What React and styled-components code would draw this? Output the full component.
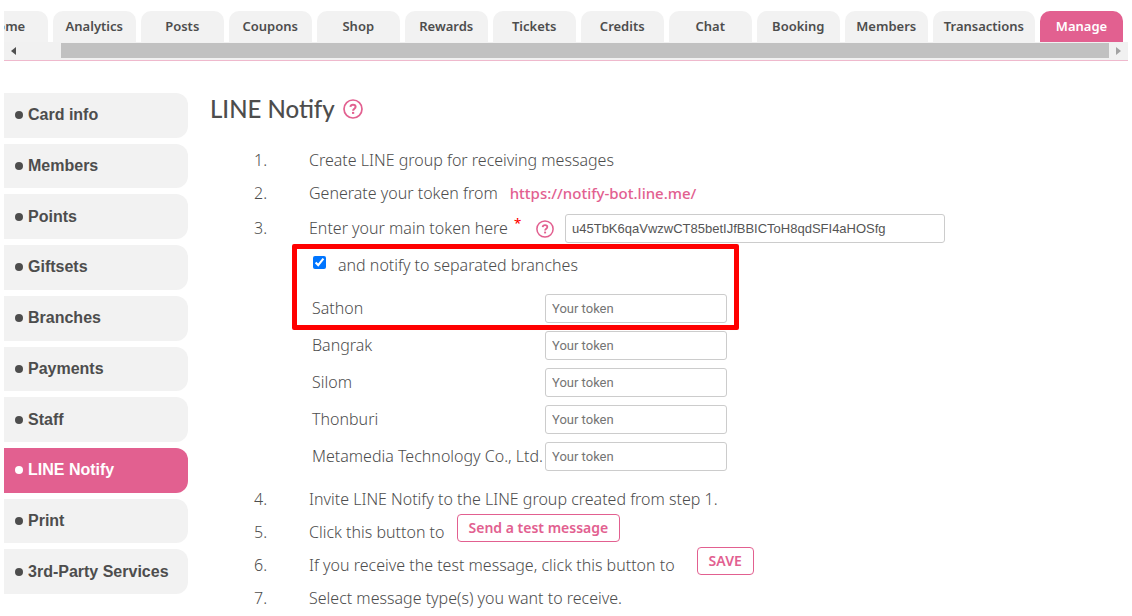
import React, { useState } from 'react';
import styled, { createGlobalStyle, ThemeProvider } from 'styled-components';

const theme = {
  pink: '#e26090',
  pinkLine: '#efb9cd',
  text: '#4d4d4d',
  panel: '#f2f2f2',
  border: '#cccccc',
  red: '#ff0000',
  font: '"Noto Sans", "Open Sans", sans-serif',
  heading: 'Lato, "Noto Sans", sans-serif',
  arial: '"Liberation Sans", Arial, sans-serif',
};

const GlobalStyle = createGlobalStyle`
  * {
    box-sizing: border-box;
  }

  body {
    margin: 0;
    background: #fff;
    color: ${theme.text};
    font-family: ${theme.font};
    font-size: 16px;
  }
`;

const Page = styled.div`
  padding: 11px 4px 0;
`;

const Header = styled.header`
  border-bottom: 1px solid ${({theme}) => theme.pinkLine};
`;

const Tabs = styled.nav`
  display: flex;
  justify-content: flex-end;
  gap: 5px;
  padding-right: 5px;
  overflow: hidden;
`;

const Tab = styled.a`
  flex: none;
  min-width: 83px;
  padding: 0 11px 1px;
  border-radius: 10px 10px 0 0;
  background: ${({theme, $active}) => $active ? theme.pink : theme.panel};
  color: ${({theme, $active}) => $active ? '#fff' : theme.text};
  font-size: 13px;
  font-weight: 600;
  line-height: 30px;
  text-align: center;
  text-decoration: none;
`;

const Scrollbar = styled.div`
  display: flex;
  height: 18px;
  padding: 1px 0 2px;
  background: #f1f1f1;
`;

const ScrollButton = styled.button`
  display: flex;
  width: 19px;
  align-items: center;
  justify-content: center;
  padding: 0;
  border: 0;
  background: transparent;
  color: ${({$dim}) => $dim ? '#a3a3a3' : '#505050'};
`;

const ScrollTrack = styled.div`
  flex: 1;
  padding-left: 38px;
`;

const ScrollThumb = styled.div`
  height: 100%;
  background: #c1c1c1;
`;

const Columns = styled.div`
  display: flex;
  align-items: flex-start;
  gap: 22px;
  padding-top: 32px;
`;

const Sidebar = styled.nav`
  display: flex;
  flex: none;
  flex-direction: column;
  gap: 6px;
  width: 184px;
  min-height: 501px;
`;

const SidebarLink = styled.a`
  display: flex;
  flex: 1;
  align-items: center;
  gap: 5px;
  padding-left: 11px;
  border-radius: 0 12px 12px 0;
  background: ${({theme, $active}) => $active ? theme.pink : theme.panel};
  color: ${({theme, $active}) => $active ? '#fff' : theme.text};
  font-family: ${({theme}) => theme.arial};
  font-size: 16px;
  font-weight: bold;
  text-decoration: none;

  &::before {
    width: 8px;
    height: 8px;
    border-radius: 50%;
    background: currentColor;
    content: '';
  }
`;

const Main = styled.main`
  flex: 1;
  min-width: 0;
`;

const Title = styled.h1`
  display: flex;
  align-items: center;
  gap: 8px;
  margin: 0 0 19px;
  font-family: ${({theme}) => theme.heading};
  font-size: 24px;
  font-weight: 500;
  line-height: 32px;
`;

const HelpButton = styled.button`
  display: flex;
  flex: none;
  padding: 0;
  border: 0;
  background: transparent;
  color: ${({theme}) => theme.pink};
  cursor: pointer;
`;

const Steps = styled.ol`
  margin: 0;
  padding: 0 0 0 44px;
  list-style: none;
`;

const Step = styled.li`
  display: flex;
  padding-top: ${({$spaced}) => $spaced ? '2px' : 0};
  font-weight: 300;
  line-height: 33px;
  white-space: nowrap;
`;

const StepNumber = styled.span`
  flex: none;
  width: 55px;
`;

const StepBody = styled.div`
  flex: 1;
  min-width: 0;
`;

const Line = styled.div`
  display: flex;
  gap: ${({$loose}) => $loose ? '22px' : '12px'};
`;

const Link = styled.a`
  color: ${({theme}) => theme.pink};
  font-size: 15px;
  font-weight: 500;
  text-decoration: none;
`;

const TokenLine = styled.div`
  display: flex;
  align-items: center;
  gap: 11px;
  padding: 2px 0 1px;
  line-height: 29px;
`;

const TokenLabel = styled.label`
  width: 216px;
`;

const Required = styled.sup`
  margin-left: 6px;
  color: ${({theme}) => theme.red};
  font-weight: 500;
  line-height: 1;
`;

const TextInput = styled.input`
  width: ${({$wide}) => $wide ? '380px' : '182px'};
  height: 29px;
  padding: 0 6px;
  border: 1px solid ${({theme}) => theme.border};
  border-radius: 3px;
  background: #fff;
  color: #555;
  font-family: ${({theme, $wide}) => $wide ? theme.arial : 'Roboto, sans-serif'};
  font-size: 13px;

  &::placeholder {
    color: #757575;
  }
`;

const Highlight = styled.div`
  width: 447px;
  margin: 0 0 1px -17px;
  padding: 0 0 2px 15px;
  border: 5px solid ${({theme}) => theme.red};
  border-radius: 2px;
`;

const CheckLine = styled.label`
  display: flex;
  gap: 12px;
  margin-bottom: 12px;
`;

const Checkbox = styled.input`
  width: 13px;
  height: 13px;
  margin: 7px 0 0 1px;
  accent-color: #0075ff;
`;

const BranchLine = styled.div`
  display: flex;
  line-height: 28px;
`;

const BranchLabel = styled.label`
  flex: none;
  width: 233px;
`;

const BranchList = styled.div`
  display: flex;
  flex-direction: column;
  gap: 8px;
  margin-bottom: 12px;
  padding-left: 3px;
`;

const Button = styled.button`
  height: 28px;
  margin-top: -2px;
  padding: 0 11px;
  border: 1px solid ${({theme}) => theme.pink};
  border-radius: 4px;
  background: #fff;
  color: ${({theme}) => theme.pink};
  font-family: inherit;
  font-size: 14px;
  font-weight: 600;
  line-height: 26px;
  cursor: pointer;
`;

const tabs = [
  'Home', 'Analytics', 'Posts', 'Coupons', 'Shop', 'Rewards', 'Tickets',
  'Credits', 'Chat', 'Booking', 'Members', 'Transactions', 'Manage',
];

const menu = [
  'Card info', 'Members', 'Points', 'Giftsets', 'Branches', 'Payments',
  'Staff', 'LINE Notify', 'Print', '3rd-Party Services',
];

const branches = ['Bangrak', 'Silom', 'Thonburi', 'Metamedia Technology Co., Ltd.'];

const Help = ({size, label}) => (
  <HelpButton type="button" aria-label={label}>
    <svg width={size} height={size} viewBox="0 0 20 20" fill="none" stroke="currentColor">
      <circle cx="10" cy="10" r="9" strokeWidth="1.7"/>
      <path d="M7.4 7.9c.2-1.5 1.2-2.2 2.6-2.2 1.5 0 2.6.8 2.6 2.1 0 1.9-2.5 1.9-2.5 3.9" strokeWidth="2"/>
      <path d="M9 12.9h2.2v2H9z" fill="currentColor" stroke="none"/>
    </svg>
  </HelpButton>
);

const Branch = ({name}) => (
  <BranchLine>
    <BranchLabel htmlFor={`token-${name}`}>{name}</BranchLabel>
    <TextInput id={`token-${name}`} type="text" placeholder="Your token"/>
  </BranchLine>
);

const NumberedStep = ({number, spaced, children}) => (
  <Step $spaced={spaced}>
    <StepNumber>{number}.</StepNumber>
    <StepBody>{children}</StepBody>
  </Step>
);

const App = () => {
  const [token, setToken] = useState('u45TbK6qaVwzwCT85betIJfBBICToH8qdSFI4aHOSfg');
  const [separated, setSeparated] = useState(true);

  return (
    <ThemeProvider theme={theme}>
      <GlobalStyle/>
      <Page>
        <Header>
          <Tabs>
            {tabs.map(tab => (
              <Tab key={tab} href="#" $active={tab === 'Manage'}>{tab}</Tab>
            ))}
          </Tabs>
          <Scrollbar>
            <ScrollButton type="button" aria-label="Scroll left">
              <svg width="5" height="8" viewBox="0 0 5 8"><path d="M5 0v8L0 4z" fill="currentColor"/></svg>
            </ScrollButton>
            <ScrollTrack>
              <ScrollThumb/>
            </ScrollTrack>
            <ScrollButton type="button" aria-label="Scroll right" $dim>
              <svg width="5" height="8" viewBox="0 0 5 8"><path d="M0 0v8l5-4z" fill="currentColor"/></svg>
            </ScrollButton>
          </Scrollbar>
        </Header>

        <Columns>
          <Sidebar>
            {menu.map(item => (
              <SidebarLink key={item} href="#" $active={item === 'LINE Notify'}>{item}</SidebarLink>
            ))}
          </Sidebar>

          <Main>
            <Title>
              LINE Notify
              <Help size={20} label="About LINE Notify"/>
            </Title>

            <Steps>
              <NumberedStep number={1}>Create LINE group for receiving messages</NumberedStep>
              <NumberedStep number={2}>
                <Line>
                  Generate your token from
                  <Link href="https://notify-bot.line.me/">https://notify-bot.line.me/</Link>
                </Line>
              </NumberedStep>
              <NumberedStep number={3} spaced>
                <TokenLine>
                  <TokenLabel htmlFor="main-token">
                    Enter your main token here<Required>*</Required>
                  </TokenLabel>
                  <Help size={18} label="About the main token"/>
                  <TextInput
                    id="main-token"
                    type="text"
                    value={token}
                    onChange={event => setToken(event.target.value)}
                    $wide
                  />
                </TokenLine>
                <Highlight>
                  <CheckLine>
                    <Checkbox
                      type="checkbox"
                      checked={separated}
                      onChange={event => setSeparated(event.target.checked)}
                    />
                    and notify to separated branches
                  </CheckLine>
                  <Branch name="Sathon"/>
                </Highlight>
                <BranchList>
                  {branches.map(name => <Branch key={name} name={name}/>)}
                </BranchList>
              </NumberedStep>
              <NumberedStep number={4}>Invite LINE Notify to the LINE group created from step 1.</NumberedStep>
              <NumberedStep number={5}>
                <Line>
                  Click this button to
                  <Button type="button">Send a test message</Button>
                </Line>
              </NumberedStep>
              <NumberedStep number={6}>
                <Line $loose>
                  If you receive the test message, click this button to
                  <Button type="button">SAVE</Button>
                </Line>
              </NumberedStep>
              <NumberedStep number={7}>Select message type(s) you want to receive.</NumberedStep>
            </Steps>
          </Main>
        </Columns>
      </Page>
    </ThemeProvider>
  );
};

export default App;
